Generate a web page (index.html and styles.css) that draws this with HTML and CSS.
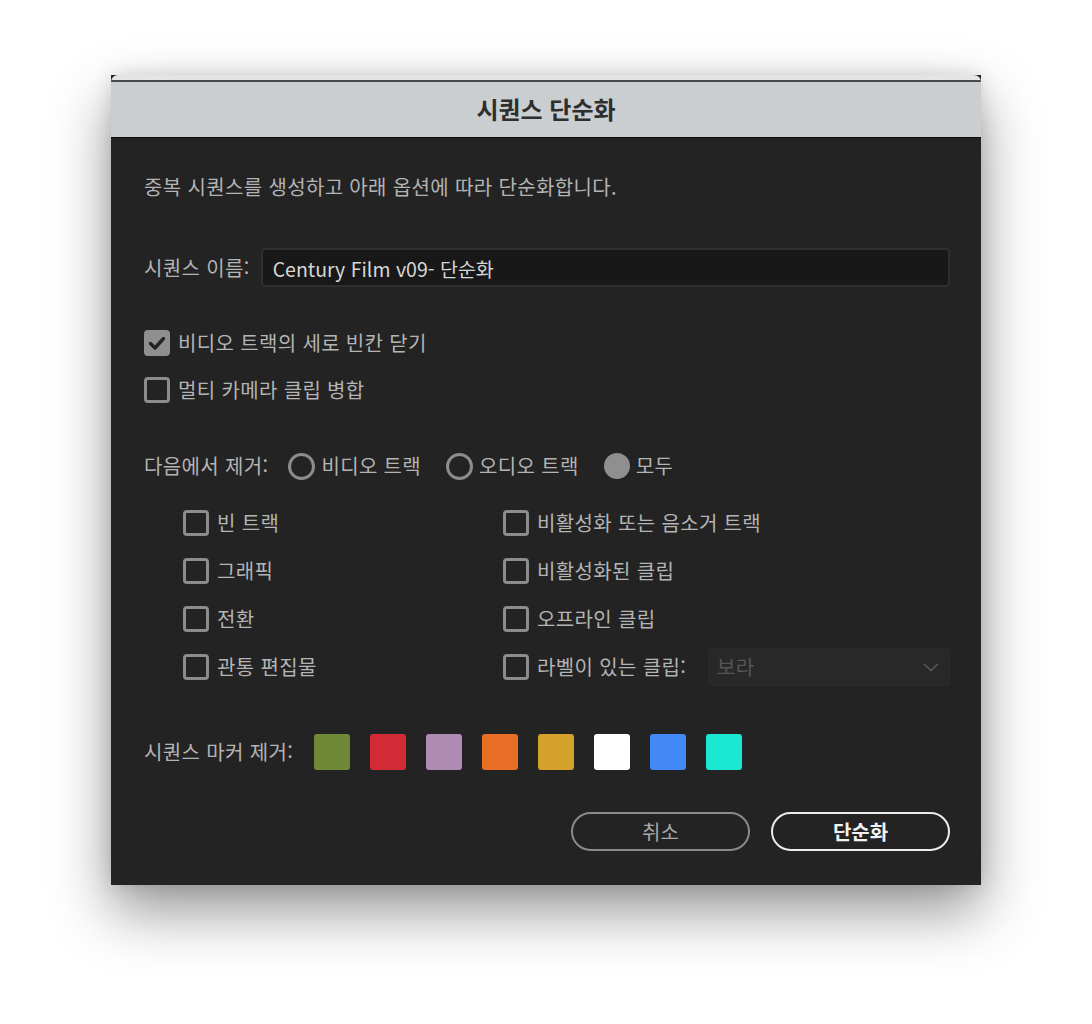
FILE: index.html
```html
<!DOCTYPE html>
<html lang="ko">
<head>
<meta charset="utf-8">
<title>시퀀스 단순화</title>
<link rel="stylesheet" href="styles.css">
</head>
<body>
<div class="window">
  <div class="rim"></div>
  <div class="titlebar">시퀀스 단순화</div>
  <div class="content">
    <p class="desc">중복 시퀀스를 생성하고 아래 옵션에 따라 단순화합니다.</p>

    <div class="name-row">
      <span class="label">시퀀스 이름:</span>
      <div class="input">Century Film v09- 단순화</div>
    </div>

    <div class="checks">
      <div class="check">
        <span class="box checked"><svg viewBox="0 0 26 26" width="26" height="26"><polyline points="6.5,13.5 11,18 19.5,8.5" fill="none" stroke="#232323" stroke-width="3.4" stroke-linecap="round" stroke-linejoin="round"/></svg></span>
        <span class="label">비디오 트랙의 세로 빈칸 닫기</span>
      </div>
      <div class="check">
        <span class="box"></span>
        <span class="label">멀티 카메라 클립 병합</span>
      </div>
    </div>

    <div class="radio-row">
      <span class="label">다음에서 제거:</span>
      <div class="radio"><span class="circle"></span><span class="label">비디오 트랙</span></div>
      <div class="radio"><span class="circle"></span><span class="label">오디오 트랙</span></div>
      <div class="radio"><span class="circle filled"></span><span class="label">모두</span></div>
    </div>

    <div class="grid">
      <div class="check"><span class="box"></span><span class="label">빈 트랙</span></div>
      <div class="check"><span class="box"></span><span class="label">비활성화 또는 음소거 트랙</span></div>
      <div class="check"><span class="box"></span><span class="label">그래픽</span></div>
      <div class="check"><span class="box"></span><span class="label">비활성화된 클립</span></div>
      <div class="check"><span class="box"></span><span class="label">전환</span></div>
      <div class="check"><span class="box"></span><span class="label">오프라인 클립</span></div>
      <div class="check"><span class="box"></span><span class="label">관통 편집물</span></div>
      <div class="check">
        <span class="box"></span><span class="label">라벨이 있는 클립:</span>
        <div class="select"><span>보라</span><svg viewBox="0 0 16 9" width="16" height="9"><polyline points="1,1 8,7.5 15,1" fill="none" stroke="#5a5a5a" stroke-width="1.5"/></svg></div>
      </div>
    </div>

    <div class="markers">
      <span class="label">시퀀스 마커 제거:</span>
      <div class="swatches">
        <span class="sw sw-green"></span>
        <span class="sw sw-red"></span>
        <span class="sw sw-purple"></span>
        <span class="sw sw-orange"></span>
        <span class="sw sw-gold"></span>
        <span class="sw sw-white"></span>
        <span class="sw sw-blue"></span>
        <span class="sw sw-cyan"></span>
      </div>
    </div>

    <div class="buttons">
      <button class="btn btn-cancel">취소</button>
      <button class="btn btn-primary">단순화</button>
    </div>
  </div>
</div>
</body>
</html>
```

FILE: styles.css
```css
* { box-sizing: border-box; }

html, body {
  margin: 0;
  padding: 0;
  background: #ffffff;
}

body {
  font-family: "Noto Sans CJK KR", "Noto Sans", sans-serif;
  padding-top: 75px;
  padding-left: 111px;
  height: 1024px;
  overflow: hidden;
}

.window {
  width: 870px;
  background: #232323;
  box-shadow: 0 26px 55px rgba(0, 0, 0, 0.42), 0 0 18px rgba(0, 0, 0, 0.12);
}

.rim {
  height: 7px;
  background: #e4e4e4;
  border-radius: 10px 10px 0 0;
  border-bottom: 2px solid #4a4a4a;
}

.titlebar {
  height: 56px;
  background: #cbced1;
  border-bottom: 1px solid #0e0e0e;
  color: #2e2e2e;
  font-size: 24px;
  font-weight: 700;
  line-height: 54px;
  text-align: center;
}

.content {
  height: 747px;
  padding: 37px 31px 0 33px;
  color: #b4b4b4;
  font-size: 20px;
  letter-spacing: 0.35px;
}

.label {
  line-height: 24px;
  white-space: nowrap;
}

.desc {
  margin: 0;
  line-height: 24px;
}

.name-row {
  margin-top: 49px;
  display: flex;
  align-items: center;
  gap: 11px;
}

.input {
  flex: 1;
  height: 39px;
  background: #181818;
  border: 2px solid #2f2f2f;
  border-radius: 4px;
  color: #d6d6d6;
  padding: 4px 0 0 10px;
  line-height: 30px;
  font-size: 19.5px;
  letter-spacing: 0;
}

.checks {
  margin-top: 43px;
  display: flex;
  flex-direction: column;
  gap: 21px;
}

.check {
  display: flex;
  align-items: center;
  gap: 8px;
  height: 26px;
}

.box {
  width: 26px;
  height: 26px;
  flex: none;
  border: 3px solid #8c8c8c;
  border-radius: 4px;
}

.box.checked {
  background: #8f8f8f;
  border: none;
}

.box.checked svg {
  display: block;
}

.radio-row {
  margin-top: 49px;
  height: 28px;
  display: flex;
  align-items: center;
}

.radio-row > .label {
  margin-right: 20px;
}

.radio {
  display: flex;
  align-items: center;
  gap: 6px;
  margin-right: 25px;
}

.circle {
  width: 27px;
  height: 27px;
  border-radius: 50%;
  border: 3.5px solid #8c8c8c;
  flex: none;
}

.circle.filled {
  background: #8f8f8f;
  border-color: #8f8f8f;
  width: 26px;
  height: 26px;
}

.grid {
  margin-top: 19px;
  padding-left: 39px;
  display: grid;
  grid-template-columns: 320px 1fr;
  grid-auto-rows: 48px;
}

.grid .check {
  height: 48px;
}

.select {
  margin-left: 14px;
  flex: 1;
  height: 38px;
  background: #282828;
  border: 1px solid #2b2b2b;
  border-radius: 3px;
  display: flex;
  align-items: center;
  justify-content: space-between;
  padding: 0 10px 0 8px;
  color: #565656;
  line-height: 24px;
}

.select svg {
  display: block;
}

.markers {
  margin-top: 43px;
  display: flex;
  align-items: center;
  gap: 21px;
  height: 36px;
}

.swatches {
  display: flex;
  gap: 20px;
}

.sw {
  width: 36px;
  height: 36px;
  border-radius: 3px;
  display: block;
}

.sw-green { background: #6f8936; }
.sw-red { background: #d22b36; }
.sw-purple { background: #b08bb3; }
.sw-orange { background: #e86e26; }
.sw-gold { background: #d4a22b; }
.sw-white { background: #ffffff; }
.sw-blue { background: #4289f5; }
.sw-cyan { background: #1be8d3; }

.buttons {
  margin-top: 42px;
  display: flex;
  justify-content: flex-end;
  gap: 21px;
}

.btn {
  width: 179px;
  height: 39px;
  border-radius: 20px;
  background: transparent;
  font-family: "Noto Sans CJK KR", "Noto Sans", sans-serif;
  font-size: 20px;
  line-height: 24px;
  padding: 0;
  cursor: default;
}

.btn-cancel {
  border: 2px solid #8a8a8a;
  color: #a8a8a8;
}

.btn-primary {
  border: 2px solid #ececec;
  color: #f2f2f2;
  font-weight: 700;
}
```
